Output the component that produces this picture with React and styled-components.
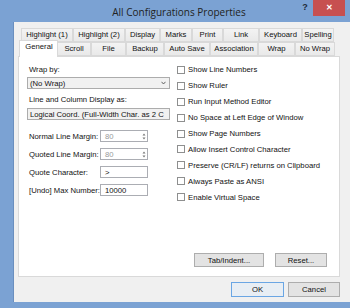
import React from 'react';
import styled, { createGlobalStyle } from 'styled-components';

const row1 = [
  ['Highlight (1)', 52],
  ['Highlight (2)', 52],
  ['Display', 35],
  ['Marks', 32],
  ['Print', 31],
  ['Link', 36],
  ['Keyboard', 43],
  ['Spelling', 32],
];

const row2 = [
  ['General', 39],
  ['Scroll', 34],
  ['File', 35],
  ['Backup', 38],
  ['Auto Save', 46],
  ['Association', 48],
  ['Wrap', 37],
  ['No Wrap', 40],
];

const checks = [
  'Show Line Numbers',
  'Show Ruler',
  'Run Input Method Editor',
  'No Space at Left Edge of Window',
  'Show Page Numbers',
  'Allow Insert Control Character',
  'Preserve (CR/LF) returns on Clipboard',
  'Always Paste as ANSI',
  'Enable Virtual Space',
];

const fields = [
  ['Normal Line Margin:', '80', true],
  ['Quoted Line Margin:', '80', true],
  ['Quote Character:', '>', false],
  ['[Undo] Max Number:', '10000', false],
];

function Chevron() {
  return (
    <svg width="5" height="4" viewBox="0 0 5 4">
      <path d="M0.5 0.8 L2.5 3 L4.5 0.8" fill="none" stroke="#555" strokeWidth="0.9" />
    </svg>
  );
}

function Spinner() {
  return (
    <svg width="4" height="9" viewBox="0 0 4 9">
      <path d="M0.5 3.5 L2 1.5 L3.5 3.5 Z" fill="#777" />
      <path d="M0.5 5.5 L2 7.5 L3.5 5.5 Z" fill="#777" />
    </svg>
  );
}

function App() {
  return (
    <>
      <GlobalStyle />
      <Window>
        <TitleBar>
          <Title>All Configurations Properties</Title>
          <Controls>
            <Help>?</Help>
            <CloseButton>✕</CloseButton>
          </Controls>
        </TitleBar>
        <Client>
          <TabRow $indent={3}>
            {row1.map(([label, w]) => (
              <Tab key={label} style={{ width: w }}>
                {label}
              </Tab>
            ))}
          </TabRow>
          <TabRow $indent={3}>
            {row2.map(([label, w], i) => (
              <Tab key={label} $active={i === 0} style={{ width: w }}>
                {label}
              </Tab>
            ))}
          </TabRow>
          <Panel>
            <Columns>
              <LeftCol>
                <Label>Wrap by:</Label>
                <Select $gap={2}>
                  <SelectText>(No Wrap)</SelectText>
                  <Chevron />
                </Select>
                <Label $gap={6}>Line and Column Display as:</Label>
                <Select $gap={3}>
                  <SelectText>Logical Coord. (Full-Width Char. as 2 C</SelectText>
                  <Chevron />
                </Select>
                <Fields>
                  {fields.map(([label, value, spin]) => (
                    <FieldRow key={label}>
                      <FieldLabel>{label}</FieldLabel>
                      <Input $disabled={spin}>
                        <span>{value}</span>
                        {spin && <Spinner />}
                      </Input>
                    </FieldRow>
                  ))}
                </Fields>
              </LeftCol>
              <RightCol>
                {checks.map((label) => (
                  <CheckRow key={label}>
                    <Box />
                    <span>{label}</span>
                  </CheckRow>
                ))}
              </RightCol>
            </Columns>
            <PanelButtons>
              <Button style={{ width: 70 }}>Tab/Indent...</Button>
              <Button style={{ width: 52 }}>Reset...</Button>
            </PanelButtons>
          </Panel>
          <Footer>
            <Button $default style={{ width: 53, height: 15 }}>
              OK
            </Button>
            <Button style={{ width: 52, height: 15 }}>Cancel</Button>
          </Footer>
        </Client>
      </Window>
    </>
  );
}

export default App;

const GlobalStyle = createGlobalStyle`
  body {
    margin: 0;
    background: #7ba2d3;
    font-family: "Liberation Sans", Arial, sans-serif;
  }
`;

const Window = styled('div')`
  width: 350px;
  height: 308px;
  display: flex;
  flex-direction: column;
  background: #7ba2d3;
  overflow: hidden;
  font-size: 7.7px;
  color: #111;
`;

const TitleBar = styled('div')`
  height: 22px;
  display: grid;
  grid-template-columns: 1fr auto;
  flex-shrink: 0;
`;

const Title = styled('div')`
  padding-left: 61px;
  text-align: center;
  font-family: "Open Sans", sans-serif;
  font-size: 10px;
  line-height: 24px;
  color: #222;
`;

const Controls = styled('div')`
  display: flex;
  align-items: flex-start;
  padding-right: 5px;
`;

const Help = styled('div')`
  width: 16px;
  font-size: 9px;
  font-weight: bold;
  line-height: 15px;
  text-align: center;
  color: #1e2a3a;
`;

const CloseButton = styled('div')`
  width: 32px;
  height: 16px;
  background: #c75050;
  color: #fff;
  font-size: 8px;
  font-weight: bold;
  line-height: 16px;
  text-align: center;
`;

const Client = styled('div')`
  flex: 1;
  margin: 0 0 6px 13px;
  border-left: 1px solid #6a8fbf;
  background: #f0f0f0;
  padding: 6px 10px 5px 4px;
  display: flex;
  flex-direction: column;
  min-height: 0;
`;

const TabRow = styled('div')`
  display: flex;
  height: 14px;
  padding-left: ${(p) => p.$indent}px;
  flex-shrink: 0;
`;

const Tab = styled('div')`
  box-sizing: border-box;
  height: ${(p) => (p.$active ? '17px' : '14px')};
  margin-top: ${(p) => (p.$active ? '-2px' : '0')};
  margin-left: ${(p) => (p.$active ? '-2px' : '0')};
  margin-right: ${(p) => (p.$active ? '-1px' : '0')};
  padding: ${(p) => (p.$active ? '0 1px 0 2px' : '0')};
  position: relative;
  z-index: ${(p) => (p.$active ? 2 : 1)};
  border: 1px solid #d9d9d9;
  border-bottom: ${(p) => (p.$active ? 'none' : '1px solid #d9d9d9')};
  background: ${(p) => (p.$active ? '#fff' : 'linear-gradient(#f3f3f3, #e9e9e9)')};
  text-align: center;
  line-height: 12px;
  white-space: nowrap;
`;

const Panel = styled('div')`
  box-sizing: border-box;
  height: 221px;
  border: 1px solid #d9d9d9;
  background: #fff;
  display: flex;
  flex-direction: column;
  padding: 5px 0 9px 8px;
  flex-shrink: 0;
`;

const Columns = styled('div')`
  display: grid;
  grid-template-columns: 143px 1fr;
  column-gap: 7px;
`;

const LeftCol = styled('div')`
  display: flex;
  flex-direction: column;
  padding-top: 3px;
`;

const Label = styled('div')`
  margin-top: ${(p) => p.$gap || 0}px;
  padding-left: 2px;
  line-height: 10px;
  white-space: nowrap;
`;

const Select = styled('div')`
  box-sizing: border-box;
  margin-top: ${(p) => p.$gap}px;
  height: 12px;
  border: 1px solid #acacac;
  background: #f1f1f1;
  display: flex;
  align-items: center;
  padding: 0 3px 0 2px;
  gap: 2px;
`;

const SelectText = styled('span')`
  flex: 1;
  white-space: nowrap;
`;

const Fields = styled('div')`
  margin-top: 10px;
  display: flex;
  flex-direction: column;
  gap: 6px;
`;

const FieldRow = styled('div')`
  display: flex;
  align-items: center;
`;

const FieldLabel = styled('span')`
  width: 71px;
  padding-left: 2px;
  white-space: nowrap;
`;

const Input = styled('div')`
  box-sizing: border-box;
  width: 48px;
  height: 12px;
  border: 1px solid #abadb3;
  background: #fff;
  color: ${(p) => (p.$disabled ? '#9a9a9a' : '#111')};
  display: flex;
  align-items: center;
  justify-content: space-between;
  padding: 0 1px 0 4px;
`;

const RightCol = styled('div')`
  display: flex;
  flex-direction: column;
`;

const CheckRow = styled('div')`
  height: 15.9px;
  display: flex;
  align-items: center;
  gap: 3px;
  white-space: nowrap;
`;

const Box = styled('span')`
  box-sizing: border-box;
  width: 8px;
  height: 8px;
  border: 1px solid #8e8f8f;
  background: #fff;
`;

const PanelButtons = styled('div')`
  margin-top: auto;
  display: flex;
  justify-content: flex-end;
  gap: 11px;
  padding-right: 12px;
`;

const Button = styled('div')`
  box-sizing: border-box;
  height: 14px;
  border: 1px solid ${(p) => (p.$default ? '#6aa6e4' : '#adadad')};
  background: ${(p) => (p.$default ? '#e8eef4' : '#e3e3e3')};
  display: flex;
  align-items: center;
  justify-content: center;
  white-space: nowrap;
`;

const Footer = styled('div')`
  margin-top: 5px;
  display: flex;
  justify-content: flex-end;
  gap: 4px;
  flex-shrink: 0;
`;
